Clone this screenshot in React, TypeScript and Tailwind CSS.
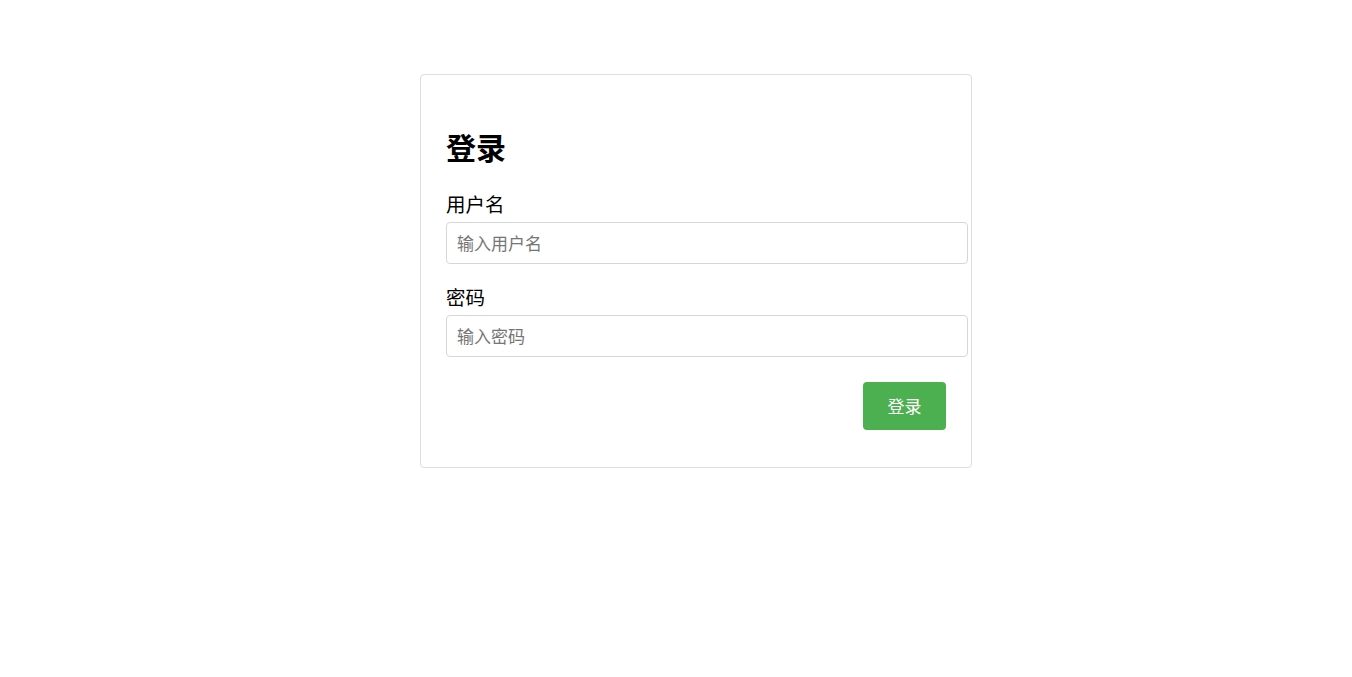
function LoginCard() {
  return (
    <div className="w-[552px] rounded-[4px] border border-[#dddddd] bg-white p-[25px]">
      <h1 className="mt-[26px] text-[30px] font-bold leading-[40px] text-black">
        登录
      </h1>

      <div className="mt-[25px]">
        <label className="block text-[19.5px] leading-[26px] text-black">
          用户名
        </label>
        <input
          type="text"
          placeholder="输入用户名"
          className="mt-[5px] box-content block w-full rounded-[4px] border border-[#d6d6d6] px-[10px] py-[10px] text-[17px] leading-[20px] text-black outline-none placeholder:text-[#757575]"
        />
      </div>

      <div className="mt-[20px]">
        <label className="block text-[19.5px] leading-[26px] text-black">
          密码
        </label>
        <input
          type="password"
          placeholder="输入密码"
          className="mt-[5px] box-content block w-full rounded-[4px] border border-[#d6d6d6] px-[10px] py-[10px] text-[17px] leading-[20px] text-black outline-none placeholder:text-[#757575]"
        />
      </div>

      <div className="mt-[25px] mb-[12px] flex justify-end">
        <button className="h-[48px] w-[83px] rounded-[4px] bg-[#4caf50] text-[17px] text-white">
          登录
        </button>
      </div>
    </div>
  );
}

export default function App() {
  return (
    <div
      className="min-h-screen bg-white pl-[40px] pt-[74px]"
      style={{ fontFamily: '"Microsoft YaHei", "Noto Sans CJK SC", "Noto Sans", sans-serif' }}
    >
      <div className="flex justify-center">
        <LoginCard />
      </div>
    </div>
  );
}
